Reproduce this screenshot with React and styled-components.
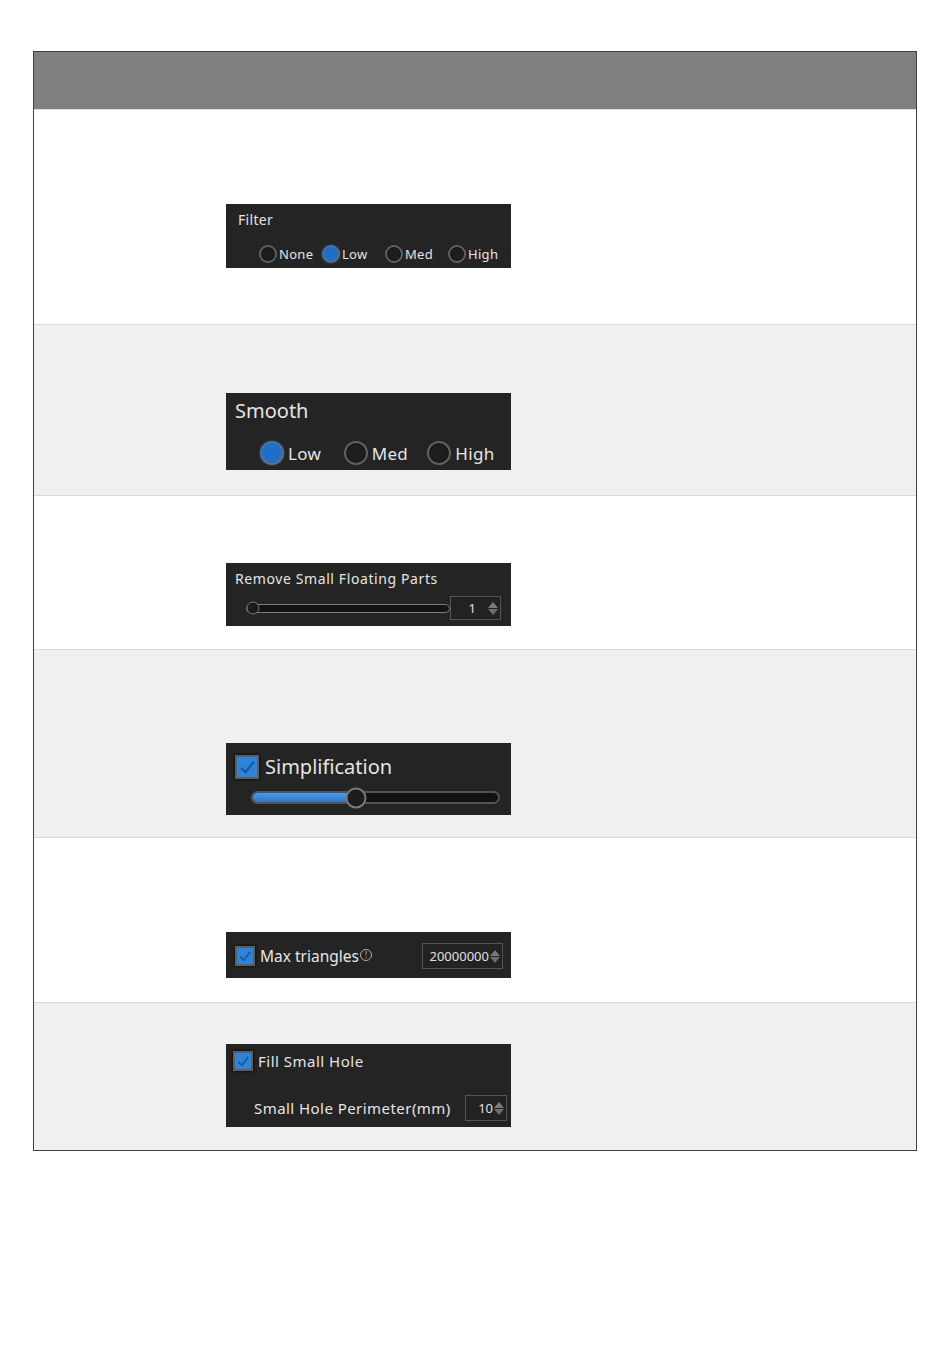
import React from 'react';
import styled, { createGlobalStyle } from 'styled-components';

const GlobalStyle = createGlobalStyle`
  body {
    margin: 0;
    background: #fff;
    font-family: "Noto Sans", "Open Sans", sans-serif;
  }
`;

const Table = styled.div`
  margin: 51px 0 0 33px;
  width: 882px;
  border: 1px solid #34444f;
  box-shadow: inset 1px 0 0 #8d959b, inset -1px 0 0 #8d959b;
`;

const Header = styled.div`
  height: 57px;
  background: #808080;
  border-bottom: 1px solid #dcdcdc;
`;

const Row = styled.div`
  height: ${p => p.h}px;
  box-sizing: border-box;
  padding: ${p => p.top}px 0 0 192px;
  background: ${p => (p.alt ? '#f0f0f0' : '#ffffff')};
  border-bottom: ${p => (p.last ? 'none' : '1px solid #d9d9d9')};
`;

const Panel = styled.div`
  width: 285px;
  height: ${p => p.h}px;
  box-sizing: border-box;
  background: #242424;
  color: #e4e4e4;
  padding: ${p => p.pad};
  display: flex;
  flex-direction: column;
`;

const Title = styled.div`
  font-size: ${p => p.size}px;
  line-height: ${p => p.lh}px;
  letter-spacing: ${p => p.ls || 0}px;
  white-space: nowrap;
`;

const RadioRow = styled.div`
  display: flex;
  align-items: center;
  margin: ${p => p.m};
`;

const RadioItem = styled.div`
  display: flex;
  align-items: center;
  width: ${p => p.w}px;
  font-size: ${p => p.fs}px;
  letter-spacing: 0.3px;
  gap: ${p => p.gap}px;
`;

const Radio = styled.span`
  width: ${p => p.size}px;
  height: ${p => p.size}px;
  box-sizing: border-box;
  border-radius: 50%;
  flex: none;
  background: ${p => (p.on ? '#1d6fcb' : '#1e1e1e')};
  border: 2px solid ${p => (p.on ? '#56708c' : '#606060')};
  box-shadow: ${p => (p.on ? '0 0 3px rgba(60,120,190,0.6)' : 'inset 0 0 2px #000')};
`;

const SliderRow = styled.div`
  display: flex;
  align-items: center;
  margin: ${p => p.m};
`;

const Track = styled.div`
  position: relative;
  width: ${p => p.w}px;
  height: ${p => p.h}px;
  box-sizing: border-box;
  border-radius: ${p => p.h / 2}px;
  background: #121212;
  border: ${p => p.bw}px solid ${p => p.bc};
  flex: none;
`;

const Fill = styled.div`
  height: 100%;
  border-radius: 6px 0 0 6px;
  background: linear-gradient(#4a9ae8, #2a78cc);
`;

const Knob = styled.span`
  position: absolute;
  top: 50%;
  transform: translate(-50%, -50%);
  width: ${p => p.size}px;
  height: ${p => p.size}px;
  box-sizing: border-box;
  border-radius: 50%;
  background: #1c1c1c;
  border: ${p => p.bw}px solid #7a7a7a;
`;

const SpinBox = styled.div`
  display: flex;
  align-items: center;
  justify-content: flex-end;
  box-sizing: border-box;
  width: ${p => p.w}px;
  height: ${p => p.h}px;
  border: 1px solid #555;
  background: #222;
  padding-right: 2px;
  font-size: ${p => p.fs}px;
  color: #e0e0e0;
  flex: none;
`;

const SpinValue = styled.span`
  margin-right: ${p => p.gap}px;
`;

const Arrows = styled.span`
  display: flex;
  flex-direction: column;
  gap: 1px;
`;

const Arrow = styled.span`
  width: 0;
  height: 0;
  border-left: 5px solid transparent;
  border-right: 5px solid transparent;
  ${p => (p.down ? 'border-top: 6px solid #6e6e6e;' : 'border-bottom: 6px solid #7a7a7a;')}
`;

const CheckRow = styled.div`
  display: flex;
  align-items: center;
  gap: ${p => p.gap}px;
  font-size: ${p => p.fs}px;
  letter-spacing: ${p => p.ls || 0}px;
  white-space: nowrap;
`;

const Box = styled.span`
  display: flex;
  align-items: center;
  justify-content: center;
  width: ${p => p.size}px;
  height: ${p => p.size}px;
  box-sizing: border-box;
  background: #2e84d8;
  border: 2px solid #5e5e5e;
  box-shadow: 0 0 3px #000;
  flex: none;
`;

const InfoIcon = styled.span`
  display: inline-flex;
  align-items: center;
  justify-content: center;
  width: 10px;
  height: 10px;
  margin-left: -4px;
  margin-top: -2px;
  border: 1px solid #aaa;
  border-radius: 50%;
  font-size: 8px;
  line-height: 1;
  color: #bbb;
`;

const Between = styled.div`
  display: flex;
  align-items: center;
  justify-content: space-between;
`;

const SubLabel = styled.div`
  font-size: 15px;
  letter-spacing: 0.45px;
  margin-left: 21px;
`;

function Check({ size }) {
  return (
    <Box size={size}>
      <svg width={size - 6} height={size - 6} viewBox="0 0 12 12">
        <path d="M2 6.5 L5 9.5 L10.5 2.5" fill="none" stroke="#1c5a9c" strokeWidth="1.6" />
      </svg>
    </Box>
  );
}

function Spin({ value, w, h, fs, gap }) {
  return (
    <SpinBox w={w} h={h} fs={fs}>
      <SpinValue gap={gap}>{value}</SpinValue>
      <Arrows>
        <Arrow />
        <Arrow down />
      </Arrows>
    </SpinBox>
  );
}

export default function App() {
  return (
    <>
      <GlobalStyle />
      <Table>
        <Header />
        <Row h={215} top={94}>
          <Panel h={64} pad="7px 0 0 12px">
            <Title size={14} lh={18} ls={0.3}>Filter</Title>
            <RadioRow m="16px 0 0 21px">
              {['None', 'Low', 'Med', 'High'].map((t, i) => (
                <RadioItem key={t} w={64} fs={13} gap={2}>
                  <Radio size={18} on={i === 1} />
                  {t}
                </RadioItem>
              ))}
            </RadioRow>
          </Panel>
        </Row>
        <Row h={171} top={68} alt>
          <Panel h={77} pad="5px 0 0 9px">
            <Title size={20} lh={26}>Smooth</Title>
            <RadioRow m="17px 0 0 25px">
              {['Low', 'Med', 'High'].map((t, i) => (
                <RadioItem key={t} w={84} fs={17} gap={4}>
                  <Radio size={24} on={i === 0} />
                  {t}
                </RadioItem>
              ))}
            </RadioRow>
          </Panel>
        </Row>
        <Row h={154} top={67}>
          <Panel h={63} pad="6px 0 0 9px">
            <Title size={14} lh={20} ls={0.6}>Remove Small Floating Parts</Title>
            <SliderRow m="7px 0 0 11px">
              <Track w={204} h={9} bw={1.5} bc="#7d7d7d">
                <Knob size={13} bw={1.5} style={{ left: '6px' }} />
              </Track>
              <Spin value="1" w={51} h={24} fs={13} gap={12} />
            </SliderRow>
          </Panel>
        </Row>
        <Row h={188} top={93} alt>
          <Panel h={72} pad="10px 0 0 9px">
            <CheckRow gap={6} fs={20}>
              <Check size={24} />
              Simplification
            </CheckRow>
            <SliderRow m="11px 0 0 16px">
              <Track w={249} h={13} bw={2} bc="#545454">
                <Fill style={{ width: '94px' }} />
                <Knob size={21} bw={2} style={{ left: '103px' }} />
              </Track>
            </SliderRow>
          </Panel>
        </Row>
        <Row h={165} top={94}>
          <Panel h={46} pad="11px 8px 0 9px">
            <Between>
              <CheckRow gap={5} fs={15.5}>
                <Check size={20} />
                Max triangles
                <InfoIcon>!</InfoIcon>
              </CheckRow>
              <Spin value="20000000" w={81} h={26} fs={13} gap={1} />
            </Between>
          </Panel>
        </Row>
        <Row h={147} top={41} alt last>
          <Panel h={83} pad="7px 4px 0 7px">
            <CheckRow gap={5} fs={15} ls={0.5}>
              <Check size={20} />
              Fill Small Hole
            </CheckRow>
            <Between style={{ marginTop: '24px' }}>
              <SubLabel>Small Hole Perimeter(mm)</SubLabel>
              <Spin value="10" w={42} h={26} fs={13} gap={1} />
            </Between>
          </Panel>
        </Row>
      </Table>
    </>
  );
}
